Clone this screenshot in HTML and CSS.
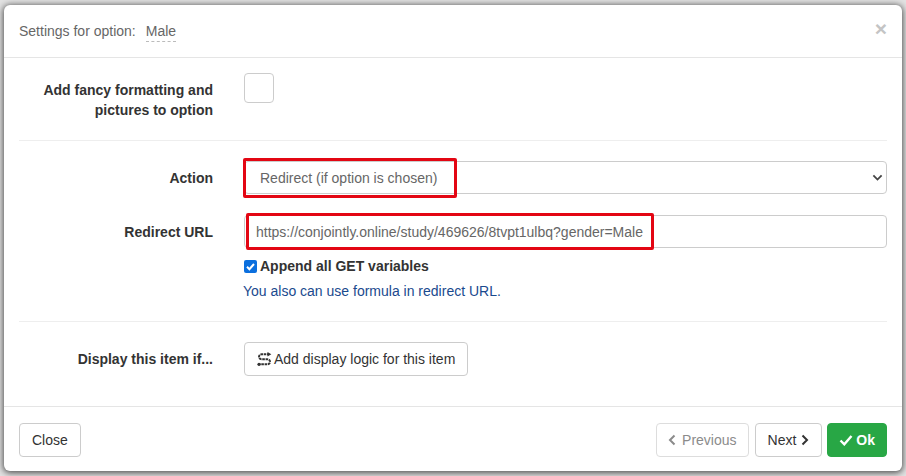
FILE: index.html
```html
<!DOCTYPE html>
<html>
<head>
  <link rel="stylesheet" href="styles.css">
</head>
<body>
  <div class="modal">
    <div class="modal-header">
      <span class="modal-title">Settings for option:</span>
      <span class="option-name">Male</span>
      <span class="close-x">×</span>
    </div>
    <div class="modal-body">
      <div class="form-row row-fancy">
        <label class="row-label">Add fancy formatting and pictures to option</label>
        <div class="row-field"><span class="big-check"></span></div>
      </div>
      <hr class="divider">
      <div class="form-row row-action">
        <label class="row-label">Action</label>
        <div class="row-field">
          <div class="select-box">
            <span>Redirect (if option is chosen)</span>
            <svg class="select-arrow" viewBox="0 0 16 16">
              <path d="M2 5l6 6 6-6"/>
            </svg>
            <span class="highlight highlight-action"></span>
          </div>
        </div>
      </div>
      <div class="form-row row-url">
        <label class="row-label">Redirect URL</label>
        <div class="row-field">
          <div class="text-box">
            https://conjointly.online/study/469626/8tvpt1ulbq?gender=Male
            <span class="highlight highlight-url"></span>
          </div>
          <label class="check-line">
            <svg class="tick-box" viewBox="0 0 13 13">
              <rect width="13" height="13" rx="2"/>
              <path d="M3 6.8l2.4 2.4L10 4"/>
            </svg>
            Append all GET variables
          </label>
          <a class="help-link">You also can use formula in redirect URL.</a>
        </div>
      </div>
      <hr class="divider divider-display">
      <div class="form-row row-display">
        <label class="row-label">Display this item if...</label>
        <div class="row-field">
          <button class="btn btn-logic">
            <svg class="icon-route" viewBox="0 0 15 14">
              <path d="M1 12.3h9.5a2.5 2.5 0 0 0 0-5H4.5a2.5 2.5 0 0 1 0-5H11" stroke-dasharray="2.6 0.7"/>
              <path class="arrow-head" d="M10.5 0l3.8 2.3-3.8 2.3z"/>
              <circle class="arrow-head" cx="2" cy="12.3" r="1.6"/>
            </svg>
            Add display logic for this item
          </button>
        </div>
      </div>
    </div>
    <div class="modal-footer">
      <button class="btn">Close</button>
      <div class="footer-right">
        <button class="btn btn-disabled">
          <svg class="chevron" viewBox="0 0 8 12"><path d="M6.5 1.5L2 6l4.5 4.5"/></svg>
          Previous
        </button>
        <button class="btn">
          Next
          <svg class="chevron" viewBox="0 0 8 12"><path d="M1.5 1.5L6 6l-4.5 4.5"/></svg>
        </button>
        <button class="btn btn-ok">
          <svg class="check" viewBox="0 0 14 12"><path d="M1.5 6.5l3.8 3.8L12.5 2"/></svg>
          Ok
        </button>
      </div>
    </div>
  </div>
</body>
</html>
```

FILE: styles.css
```css
* {
  box-sizing: border-box;
  margin: 0;
  padding: 0;
}

body {
  width: 906px;
  height: 476px;
  overflow: hidden;
  padding: 5px 4px;
  background: #e2e2e2;
  font-family: "Liberation Sans", Arial, sans-serif;
  font-size: 14px;
  color: #333;
}

.modal {
  width: 898px;
  height: 466px;
  background: #fff;
  border-radius: 6px;
  box-shadow: 0 1px 6px 1px rgba(0, 0, 0, 0.65);
  display: flex;
  flex-direction: column;
}

.modal-header {
  height: 53px;
  flex: none;
  display: flex;
  align-items: center;
  padding: 0 15px;
  border-bottom: 1px solid #e5e5e5;
  color: #666;
}

.modal-title {
  margin-right: 10px;
}

.option-name {
  border-bottom: 1px dashed #bbb;
  padding-bottom: 2px;
  margin-top: 3px;
}

.close-x {
  margin-left: auto;
  font-size: 21px;
  font-weight: bold;
  color: #c4c4c4;
  margin-top: -4px;
}

.modal-body {
  flex: 1;
  padding: 15px;
}

.form-row {
  display: grid;
  grid-template-columns: 194px 1fr;
  column-gap: 31px;
}

.row-label {
  text-align: right;
  font-weight: bold;
  line-height: 20px;
  color: #333;
}

.row-fancy {
  height: 67px;
}

.row-fancy .row-label {
  padding-top: 7px;
}

.big-check {
  display: block;
  width: 30px;
  height: 30px;
  border: 1px solid #ccc;
  border-radius: 4px;
}

.divider {
  border: 0;
  border-top: 1px solid #eee;
}

.divider-display {
  margin-top: 20px;
}

.row-action {
  margin-top: 20px;
  align-items: center;
}

.row-url {
  margin-top: 21px;
}

.row-url .row-label {
  padding-top: 7px;
}

.select-box,
.text-box {
  position: relative;
  height: 33px;
  border: 1px solid #ccc;
  border-radius: 4px;
  display: flex;
  align-items: center;
  color: #666;
}

.select-box {
  padding-left: 15px;
}

.text-box {
  padding-left: 11px;
}

.select-arrow {
  width: 11px;
  height: 11px;
  margin-left: auto;
  margin-right: 3px;
  fill: none;
  stroke: #444;
  stroke-width: 2.6;
}

.highlight {
  position: absolute;
  border: 3px solid #e30613;
  border-radius: 2px;
  pointer-events: none;
}

.highlight-action {
  left: -2px;
  top: -4px;
  width: 214px;
  height: 40px;
}

.highlight-url {
  left: 1px;
  top: -3px;
  width: 408px;
  height: 37px;
}

.check-line {
  display: flex;
  align-items: center;
  gap: 3px;
  margin-top: 9px;
  height: 18px;
  font-weight: bold;
}

.tick-box {
  width: 13px;
  height: 13px;
}

.tick-box rect {
  fill: #0b6fde;
}

.tick-box path {
  fill: none;
  stroke: #fff;
  stroke-width: 2;
}

.help-link {
  display: block;
  margin-top: 6px;
  margin-left: -1px;
  line-height: 20px;
  color: #1a4a8e;
}

.row-display {
  margin-top: 20px;
}

.row-display .row-label {
  padding-top: 7px;
}

.btn {
  height: 34px;
  padding: 0 12px;
  display: inline-flex;
  align-items: center;
  gap: 5px;
  background: #fff;
  border: 1px solid #ccc;
  border-radius: 4px;
  font-family: inherit;
  font-size: 14px;
  color: #333;
}

.btn-logic {
  gap: 2px;
}

.icon-route {
  width: 15px;
  height: 14px;
}

.icon-route path {
  fill: none;
  stroke: #333;
  stroke-width: 2;
}

.icon-route .arrow-head {
  fill: #333;
  stroke: none;
}

.modal-footer {
  flex: none;
  height: 65px;
  padding: 16px 15px;
  border-top: 1px solid #e5e5e5;
  display: flex;
  justify-content: space-between;
}

.footer-right {
  display: flex;
  gap: 5px;
}

.chevron {
  width: 8px;
  height: 12px;
  fill: none;
  stroke: currentColor;
  stroke-width: 2;
}

.btn-disabled {
  padding: 0 11px;
  gap: 6px;
  margin-right: 1px;
  color: #8b8b8b;
  border-color: #ddd;
}

.btn-ok {
  padding: 0 11px;
  gap: 3px;
  background: #28a745;
  border-color: #28a745;
  color: #fff;
  font-weight: bold;
}

.check {
  width: 14px;
  height: 12px;
  fill: none;
  stroke: #fff;
  stroke-width: 2.4;
}
```
